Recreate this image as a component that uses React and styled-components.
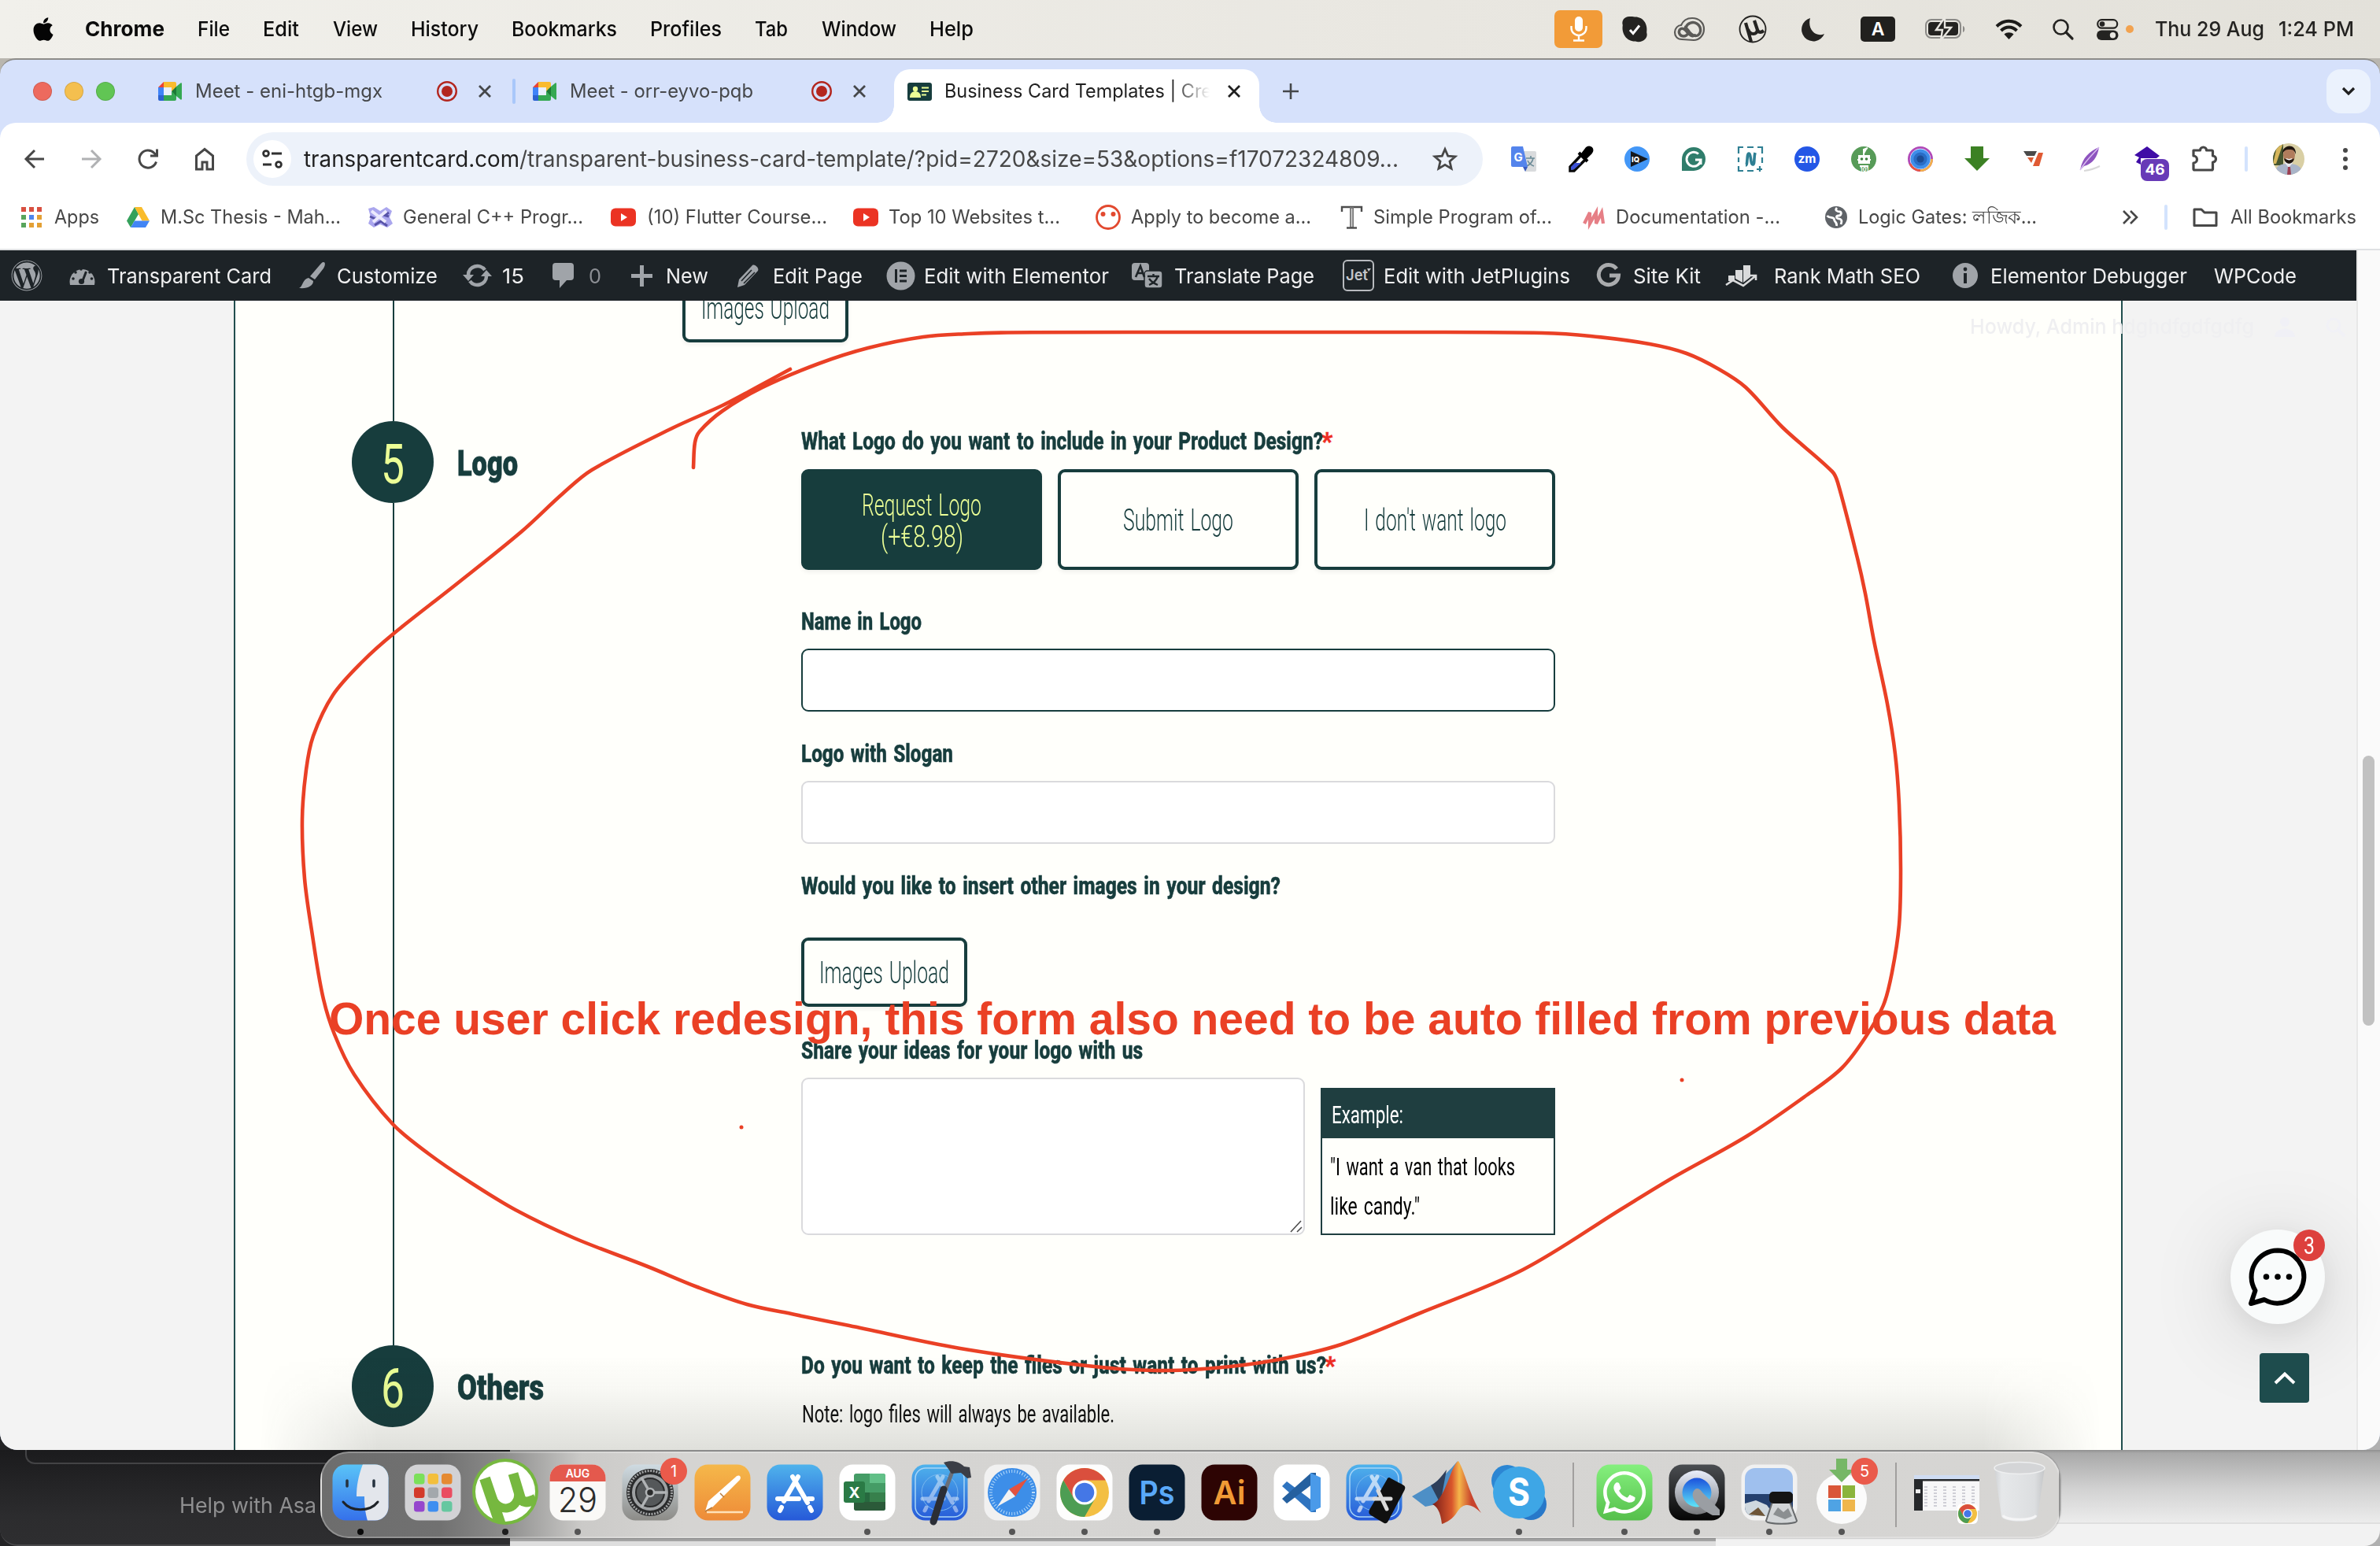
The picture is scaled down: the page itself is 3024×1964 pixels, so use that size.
import React, { useLayoutEffect, useRef } from 'react';
import styled, { createGlobalStyle, css } from 'styled-components';
import { FaApple, FaWordpress, FaWhatsapp } from 'react-icons/fa';

const INK = '#173d3d';
const RED = '#ea4025';
const UI = 'Inter, "Liberation Sans", sans-serif';
const NARROW = 'Roboto, "Liberation Sans", sans-serif';

const Global = createGlobalStyle`
  * { box-sizing: border-box; }
  body { margin: 0; background: #2a2a2c; font-family: ${UI}; }
  svg { display: block; overflow: visible; flex: none; }
`;

/* ---------- text that is condensed or widened to a given measure ---------- */
const Measure = styled.span`
  display: block;
  flex: none;
  width: ${(p) => p.$w}px;
  margin-left: ${(p) => p.$ml || 0}px;
  white-space: nowrap;
`;
const Glyphs = styled.span`
  display: inline-block;
  transform-origin: 0 50%;
  white-space: pre;
`;
function Fit({ w, ml, children, className }) {
  const ref = useRef(null);
  useLayoutEffect(() => {
    const el = ref.current;
    el.style.transform = 'none';
    const natural = el.getBoundingClientRect().width;
    if (natural) el.style.transform = `scaleX(${w / natural})`;
  }, [w, children]);
  return (
    <Measure $w={w} $ml={ml} className={className}>
      <Glyphs ref={ref}>{children}</Glyphs>
    </Measure>
  );
}

const IconSvg = styled.svg`
  margin-left: ${(p) => p.$ml}px;
`;
const Icon = ({ w = 32, h, vb, ml = 0, children, ...rest }) => (
  <IconSvg $ml={ml} width={w} height={h || w} viewBox={vb || `0 0 ${w} ${h || w}`} fill="none" {...rest}>
    {children}
  </IconSvg>
);

/* ---------- screen ---------- */
const Screen = styled.div`
  position: relative;
  width: 3024px;
  height: 1964px;
  overflow: hidden;
  display: flex;
  flex-direction: column;
  background:
    linear-gradient(#b9b6af, #b9b6af) 0 0 / 100% 200px no-repeat,
    linear-gradient(90deg, #232325 0 648px, #b0b0b0 648px);
`;

/* ---------- menu bar ---------- */
const MenuBar = styled.header`
  height: 74px;
  flex: none;
  display: flex;
  align-items: center;
  padding: 0 33px 0 38px;
  background: linear-gradient(90deg, #f1f0eb, #e9e7e1 60%, #e3e1da);
  color: #0c0c0c;
  font: 500 26px/40px ${UI};
`;
const MenuTitle = styled(Fit)`
  font-weight: 700;
`;
const MenuItems = styled.nav`
  display: flex;
  gap: 42.2px;
  margin-left: 44px;
`;
const StatusItems = styled.div`
  display: flex;
  align-items: center;
  margin-left: auto;
  color: #242321;
`;
const MicBox = styled.div`
  width: 61px;
  height: 48px;
  border-radius: 7px;
  background: #f29b38;
  display: grid;
  place-items: center;
`;
const InputSource = styled.div`
  width: 44px;
  height: 32px;
  margin-left: 45px;
  border-radius: 5px;
  background: #21201e;
  color: #fff;
  font: 600 23px/33px ${UI};
  text-align: center;
`;
const PrivacyDot = styled.i`
  width: 10px;
  height: 10px;
  margin-left: 9px;
  border-radius: 50%;
  background: #f2a24f;
`;

const menus = [['File', 41], ['Edit', 46], ['View', 57], ['History', 86], ['Bookmarks', 134], ['Profiles', 91], ['Tab', 42], ['Window', 95], ['Help', 56]];

function TopBar() {
  return (
    <MenuBar>
      <FaApple size={34} color="#050505" />
      <MenuItems>
        <MenuTitle w={101} ml={-8}>Chrome</MenuTitle>
        {menus.map(([t, w]) => <Fit key={t} w={w}>{t}</Fit>)}
      </MenuItems>
      <StatusItems>
        <MicBox>
          <Icon w={22} h={32}>
            <rect x="6" y="0" width="10" height="19" rx="5" fill="#fff" />
            <path d="M1.5 12v2.500a9.500 9.500 0 0 0 19 0V12M11 24v6M4 30.500h14" stroke="#fff" strokeWidth="2.400" />
          </Icon>
        </MicBox>
        <Icon w={32} ml={25}>
          <path d="M9 0C3 0-1 5 .8 11-1 22 6 32 17 31.500 24 34 34 29 31.200 20 33 9 26 0 16 .6 14 0 12 0 9 0z" fill="#242321" />
          <path d="M10 17l4 4.500 8-10" stroke="#fff" strokeWidth="3" />
        </Icon>
        <Icon w={40} h={30} ml={34}>
          <path d="M10 28C4 28 1 24 1 19s4-9 8-9C12 3 17 1 23 1c9 0 15 6 15 14s-6 14-13 14z" stroke="#5b5a57" strokeWidth="2.200" />
          <path d="M28 22c-5 4-9 0-12-4-3-4-7-5-9-2-2 4 1 8 5 8 3 0 5-2 6-4M15 13c2-6 9-8 14-5 6 4 6 12 1 15-5 2-8-1-11-5-2-3-3-5-6-6" stroke="#5b5a57" strokeWidth="3.400" />
        </Icon>
        <Icon w={36} ml={42}>
          <circle cx="18" cy="18" r="16.500" stroke="#242321" strokeWidth="1.800" />
          <path d="M9 10l7 24M12 18c2 8 12 8 12 0M20 7l4 12c1 3 4 4 8 1" stroke="#242321" strokeWidth="4.200" />
        </Icon>
        <Icon w={28} ml={46}>
          <path d="M9 0A15 15 0 1 0 27 20C16 25 5 14 9 0z" fill="#242321" />
        </Icon>
        <InputSource>A</InputSource>
        <Icon w={52} h={26} ml={38}>
          <rect x="1" y="1" width="44" height="23" rx="7" stroke="#8b8a87" strokeWidth="2" />
          <rect x="4" y="4" width="38" height="17" rx="4" fill="#242321" />
          <path d="M25-2L14 14h8l-2 13 13-16h-8z" fill="#242321" stroke="#e8e6e0" strokeWidth="2.400" />
          <path d="M48 9v8c3-1 3-7 0-8z" fill="#8b8a87" />
        </Icon>
        <Icon w={35} h={26} ml={37}>
          <path d="M2 9.500c9-9 22-9 31 0M7.500 15c6-6 14-6 20 0" stroke="#1c1b19" strokeWidth="4" />
          <path d="M17.500 26l-6-6.500c3-3 9-3 12 0z" fill="#1c1b19" />
        </Icon>
        <Icon w={26} ml={38}>
          <circle cx="10.500" cy="10.500" r="9" stroke="#242321" strokeWidth="2.600" />
          <path d="M17 17l8 8" stroke="#242321" strokeWidth="3.200" strokeLinecap="round" />
        </Icon>
        <Icon w={28} h={27} ml={30}>
          <rect x="1.200" y="1.200" width="25" height="10.500" rx="5.200" stroke="#242321" strokeWidth="2.200" />
          <circle cx="7" cy="6.500" r="3.300" fill="#242321" />
          <rect x="0" y="14.500" width="27.500" height="12.500" rx="6.200" fill="#242321" />
          <circle cx="20.500" cy="20.700" r="3.700" fill="#e8e6e0" />
        </Icon>
        <PrivacyDot />
        <Fit w={139} ml={27}>Thu 29 Aug</Fit>
        <Fit w={96} ml={18}>1:24 PM</Fit>
      </StatusItems>
    </MenuBar>
  );
}

/* ---------- browser window ---------- */
const BrowserWindow = styled.main`
  height: 1768px;
  flex: none;
  border-top: 2px solid #8d8c89;
  border-radius: 20px 20px 22px 22px;
  overflow: hidden;
  display: flex;
  flex-direction: column;
  background: #d6e1fb;
`;
const TabStrip = styled.div`
  height: 80px;
  flex: none;
  display: flex;
  align-items: center;
  padding: 0 12px 0 42px;
  color: #45474a;
  font: 400 24px/36px ${UI};
`;
const Lights = styled.div`
  display: flex;
  gap: 16px;
`;
const Light = styled.i`
  width: 24px;
  height: 24px;
  border-radius: 50%;
  background: ${(p) => p.$c};
  border: 1px solid rgba(0, 0, 0, 0.12);
`;
const TabRule = styled.i`
  width: 4px;
  height: 32px;
  margin-left: ${(p) => p.$ml}px;
  border-radius: 2px;
  background: ${(p) => p.$c || '#a9c7fa'};
`;
const ActiveTab = styled.div`
  position: relative;
  align-self: flex-end;
  width: 464px;
  height: 68px;
  margin-left: 34px;
  padding-left: 17px;
  padding-bottom: 12px;
  border-radius: 20px 20px 0 0;
  background: #fff;
  color: #1f1f1f;
  display: flex;
  align-items: center;
  &::before, &::after {
    content: '';
    position: absolute;
    bottom: 0;
    width: 22px;
    height: 22px;
  }
  &::before { left: -22px; background: radial-gradient(circle at 0 0, transparent 21.5px, #fff 22px); }
  &::after { right: -22px; background: radial-gradient(circle at 100% 0, transparent 21.5px, #fff 22px); }
`;
const Fade = styled.div`
  width: 337px;
  margin-left: 16px;
  mask-image: linear-gradient(90deg, #000 86%, transparent 100%);
`;
const TabMenu = styled.div`
  width: 56px;
  height: 56px;
  margin-left: auto;
  border-radius: 18px;
  background: #ebf2fd;
  display: grid;
  place-items: center;
`;
const Chrome = styled.div`
  height: 162px;
  flex: none;
  background: #fff;
  border-radius: 20px 20px 0 0;
  border-bottom: 2px solid #dfe1e3;
`;
const NavRow = styled.div`
  height: 92px;
  display: flex;
  align-items: center;
  padding-left: 30px;
`;
const NavButtons = styled.div`
  display: flex;
  gap: 44px;
`;
const AddressBar = styled.div`
  width: 1571px;
  height: 68px;
  margin-left: 39px;
  padding-left: 9px;
  border-radius: 34px;
  background: #edf2fa;
  display: flex;
  align-items: center;
  color: #474747;
  font: 400 28px/40px ${UI};
`;
const SiteInfo = styled.div`
  width: 48px;
  height: 48px;
  border-radius: 50%;
  background: #fff;
  display: grid;
  place-items: center;
`;
const Domain = styled(Fit)`
  color: #1f1f1f;
`;
const Extensions = styled.div`
  display: flex;
  gap: 40px;
  margin-left: 36px;
`;
const ExtSlot = styled.div`
  position: relative;
  width: 32px;
  height: 32px;
`;
const CountBadge = styled.span`
  position: absolute;
  left: 8px;
  top: 16px;
  width: 36px;
  height: 28px;
  border-radius: 8px;
  background: #673ab7;
  color: #fff;
  font: 700 19px/28px ${UI};
  text-align: center;
`;
const Bookmarks = styled.div`
  height: 56px;
  display: flex;
  align-items: center;
  padding-left: 27px;
  color: #474747;
  font: 400 24px/36px ${UI};
`;

const Meet = ({ ml }) => (
  <Icon w={30} h={24} ml={ml}>
    <path d="M0 7L7 0v7z" fill="#e94235" />
    <path d="M7 0h14a2 2 0 0 1 2 2v6l-6 4V7H7z" fill="#f9bb2d" />
    <path d="M0 7h7v10H0z" fill="#3f83f8" />
    <path d="M0 17h7v7H2a2 2 0 0 1-2-2z" fill="#2c62d0" />
    <path d="M7 17h10v-5l6 5v5a2 2 0 0 1-2 2H7z" fill="#35a852" />
    <path d="M7 7h10v10H7z" fill="#e9effc" />
    <path d="M17 12l6-6v12z" fill="#1b7a35" />
    <path d="M23 6l5.500-4.500c.8-.5 1.500 0 1.500 1v19c0 1-.7 1.500-1.500 1L23 18z" fill="#35a852" />
  </Icon>
);
const Recording = ({ ml }) => (
  <Icon w={26} ml={ml}>
    <circle cx="13" cy="13" r="11.800" stroke="#b3261e" strokeWidth="2.400" />
    <circle cx="13" cy="13" r="7" fill="#b3261e" />
  </Icon>
);
const Close = ({ ml, c = '#45474a' }) => (
  <Icon w={20} ml={ml}><path d="M3 3l14 14M17 3L3 17" stroke={c} strokeWidth="2.800" /></Icon>
);
const YouTube = ({ ml }) => (
  <Icon w={32} h={24} ml={ml}>
    <rect width="32" height="23" y=".5" rx="6" fill="#eb3323" />
    <path d="M13 7l8 5-8 5z" fill="#fff" />
  </Icon>
);

function Tabs() {
  return (
    <TabStrip>
      <Lights><Light $c="#ed6a5e" /><Light $c="#f4bf4f" /><Light $c="#61c554" /></Lights>
      <Meet ml={55} />
      <Fit w={238} ml={17}>Meet - eni-htgb-mgx</Fit>
      <Recording ml={69} />
      <Close ml={25} />
      <TabRule $ml={25} />
      <Meet ml={22} />
      <Fit w={233} ml={17}>Meet - orr-eyvo-pqb</Fit>
      <Recording ml={74} />
      <Close ml={25} />
      <ActiveTab>
        <Icon w={31} h={23}>
          <rect width="31" height="23" rx="3" fill="#173d3d" />
          <circle cx="10" cy="8" r="3.200" fill="#ecff96" />
          <path d="M4 18c0-8 12-8 12 0zM18 6.500h9M18 11h9M18 15.500h6" stroke="#ecff96" strokeWidth="2" fill="#ecff96" />
        </Icon>
        <Fade><Fit w={340}>Business Card Templates | Cre</Fit></Fade>
        <Close ml={21} c="#1f1f1f" />
      </ActiveTab>
      <Icon w={20} ml={30}><path d="M10 0v20M0 10h20" stroke="#45474a" strokeWidth="2.600" /></Icon>
      <TabMenu>
        <Icon w={18} h={12}><path d="M2 2l7 7 7-7" stroke="#1f1f1f" strokeWidth="3.200" /></Icon>
      </TabMenu>
    </TabStrip>
  );
}

function ExtensionIcons() {
  return (
    <Extensions>
      <Icon>
        <path d="M12 6h18a2 2 0 0 1 2 2v22a2 2 0 0 1-2 2H18z" fill="#d9dbdd" />
        <path d="M19 15h11M25 12v3M28 15c-1 5-4 8-8 10M21 18c2 4 5 6 8 7" stroke="#6a8a96" strokeWidth="1.600" />
        <path d="M2 0h13l6 26H2a2 2 0 0 1-2-2V2a2 2 0 0 1 2-2z" fill="#5484ec" />
        <path d="M15 26h6l-3 6z" fill="#3a5bbd" />
        <text x="3.500" y="19" fontFamily={UI} fontWeight="700" fontSize="15" fill="#fff">G</text>
      </Icon>
      <Icon>
        <path d="M18 10L3 26v5h5L23 16" fill="#fff" stroke="#0a0a0a" strokeWidth="3.500" />
        <path d="M9 21h8L8 29l-4 1v-4z" fill="#3c51d6" />
        <path d="M14 8l11 11M18 11l6-8c4-4 9 1 5 5l-7 7z" stroke="#000" strokeWidth="4" fill="#000" />
      </Icon>
      <Icon>
        <circle cx="16" cy="16" r="16" fill="#4397f7" />
        <path d="M8 6l22 10L8 26z" fill="#15191d" />
        <text x="9" y="19.500" fontFamily={UI} fontWeight="800" fontSize="9.500" fill="#fff">IQ</text>
      </Icon>
      <Icon>
        <path d="M1 31V16A15 15 0 1 1 16 31z" fill="#2f7d6b" />
        <path d="M22 9.500A9 9 0 1 0 25 17h-7M25 17v6" stroke="#fff" strokeWidth="3" />
      </Icon>
      <Icon>
        <path d="M1 9V1h6M12 1h8M25 1h6v8M31 14v7M1 14v6M1 25v6h6M12 31h8M24 29h7M28 25v7" stroke="#2e7f93" strokeWidth="2.200" />
        <path d="M10 24c3 0 1-15 4-15s2 14 5 14 1-8 3-15" stroke="#2e7f93" strokeWidth="3.600" />
      </Icon>
      <Icon>
        <circle cx="16" cy="16" r="16" fill="#2457e6" />
        <text x="16" y="21" textAnchor="middle" fontFamily={UI} fontWeight="700" fontSize="15.500" fill="#fff">zm</text>
      </Icon>
      <Icon>
        <circle cx="16" cy="16" r="16" fill="#579b58" />
        <path d="M16 11V4l5-2M10 12h13v9H10zM8 17h17M11 25h11" fill="#fff" stroke="#fff" strokeWidth="2" />
        <text x="17" y="32" textAnchor="middle" fontFamily={UI} fontWeight="700" fontSize="7" fill="#fff">101</text>
        <circle cx="13.500" cy="16" r="1.800" fill="#3e8040" /><circle cx="19.500" cy="16" r="1.800" fill="#3e8040" />
      </Icon>
      <Icon>
        <circle cx="16" cy="16" r="14.600" stroke="#b04ab8" strokeWidth="2.800" />
        <path d="M16 30.600A14.600 14.600 0 0 0 30.600 16" stroke="#f2b14b" strokeWidth="2.800" />
        <path d="M3 22a14.600 14.600 0 0 0 13 8.600" stroke="#e8553e" strokeWidth="2.800" />
        <circle cx="16" cy="16" r="12.600" fill="#3f8ee9" /><circle cx="16" cy="16" r="8.600" fill="#2a6cc4" /><circle cx="16" cy="16" r="4.600" fill="#1c4c94" />
      </Icon>
      <Icon><path d="M8 0h16v15h8L16 31 0 15h8z" fill="#3c8124" /></Icon>
      <Icon>
        <path d="M3 6h17l-3 6H7z" fill="#4a4a4a" /><path d="M8 14h8l-3 7z" fill="#d95c35" />
        <path d="M22 8h6l-5 17h-8z" fill="#e05a33" />
      </Icon>
      <Icon>
        <path d="M27 1C15 6 6 14 3 30l5-5C19 22 25 14 27 1z" fill="#8e54bf" />
        <path d="M27 1C19 10 10 18 3 30" stroke="#d9bdf0" strokeWidth="1.500" />
        <path d="M8 31c8-1 14-3 20-6" stroke="#d8d8d8" strokeWidth="2" />
      </Icon>
      <ExtSlot>
        <Icon><path d="M16 0l16 12-4 3H8v8l-6-3 4-6-6-3z" fill="#3f0ca6" /></Icon>
        <CountBadge>46</CountBadge>
      </ExtSlot>
      <Icon>
        <path d="M3 5h8.500a4 4 0 0 1 8 0H26a1.500 1.500 0 0 1 1.500 1.500V12a4 4 0 0 1 0 8v8.500A1.500 1.500 0 0 1 26 30H4.500A1.500 1.500 0 0 1 3 28.500V21a4.500 4.500 0 0 0 0-9z" stroke="#474747" strokeWidth="3.200" strokeLinejoin="round" />
      </Icon>
    </Extensions>
  );
}

function Toolbar() {
  return (
    <Chrome>
      <NavRow>
        <NavButtons>
          <Icon w={28}><path d="M26 14H4M14 3L3 14l11 11" stroke="#474747" strokeWidth="3" /></Icon>
          <Icon w={28}><path d="M2 14h22M14 3l11 11-11 11" stroke="#b0b1b3" strokeWidth="3" /></Icon>
          <Icon w={28}><path d="M24.500 17.500A11 11 0 1 1 22 6.500l3 3M25.500 1.500V10H17" stroke="#474747" strokeWidth="3" /></Icon>
          <Icon w={28}><path d="M3.500 27V10L14 1.500 24.500 10v17h-7.500v-9h-6v9z" stroke="#474747" strokeWidth="3" /></Icon>
        </NavButtons>
        <AddressBar>
          <SiteInfo>
            <Icon w={26} h={24}>
              <circle cx="5" cy="5" r="3.400" stroke="#303030" strokeWidth="2.800" /><path d="M12 5h13M1 19h11" stroke="#303030" strokeWidth="3" />
              <circle cx="21" cy="19" r="3.400" stroke="#303030" strokeWidth="2.800" />
            </Icon>
          </SiteInfo>
          <Domain w={274} ml={16}>transparentcard.com</Domain>
          <Fit w={1117}>/transparent-business-card-template/?pid=2720&size=53&options=f17072324809...</Fit>
          <Icon w={32} ml={43}>
            <path d="M16 3.500l3.700 8.600 9.300.8-7 6.100 2.100 9.100-8.100-4.800-8.100 4.800 2.100-9.100-7-6.100 9.300-.8z" stroke="#474747" strokeWidth="2.800" />
          </Icon>
        </AddressBar>
        <ExtensionIcons />
        <TabRule $ml={36} $c="#d3e3fd" />
        <Icon w={40} ml={32}>
          <defs><clipPath id="face"><circle cx="20" cy="20" r="20" /></clipPath></defs>
          <g clipPath="url(#face)">
            <rect width="40" height="40" fill="#d9cfa4" /><path d="M0 0h13v28H0z" fill="#46552f" /><path d="M6 0h7l-9 26H0z" fill="#d6b65c" />
            <path d="M2 40c1-12 8-14 18-14s17 3 18 14z" fill="#a9b4c8" />
            <path d="M15 25l5 6 5-6v-4H15z" fill="#e9e9ee" /><path d="M19 30h3l1 10h-5z" fill="#9c3f52" />
            <ellipse cx="20.500" cy="15" rx="7.500" ry="10" fill="#b07c5c" />
            <path d="M12 14C11 1 30-1 29 14c-2-5-3-6-8-6s-7 1-9 6zM14 19c1 9 12 9 13 0-2 2-3 1-6 1s-5 1-7-1z" fill="#20160f" />
            <path d="M17 19.500c2 1.500 5 1.500 7 0" stroke="#fff" strokeWidth="1.500" />
          </g>
        </Icon>
        <Icon w={6} h={28} ml={49}>
          <circle cx="3" cy="3" r="3" fill="#474747" /><circle cx="3" cy="14" r="3" fill="#474747" /><circle cx="3" cy="25" r="3" fill="#474747" />
        </Icon>
      </NavRow>
      <Bookmarks>
        <Icon w={26}>
          {['#d85040', '#d85040', '#d85040', '#58a55c', '#4f86ec', '#e3a035', '#58a55c', '#e3a035', '#e3a035'].map((c, i) => (
            <rect key={i} x={(i % 3) * 10} y={Math.floor(i / 3) * 10} width="6" height="6" fill={c} />
          ))}
        </Icon>
        <Fit w={57} ml={16}>Apps</Fit>
        <Icon w={29} h={26} ml={35}>
          <path d="M10 0L0 17.500 5 26l10-17z" fill="#35a15c" /><path d="M10 0h9l10 17.500H19.500z" fill="#f9bc2c" />
          <path d="M5 26l5-8.500h19L24 26z" fill="#4285f4" />
        </Icon>
        <Fit w={229} ml={14}>M.Sc Thesis - Mah...</Fit>
        <Icon w={32} h={28} ml={34}>
          <path d="M1 3l7-2 8 5 8-5 7 5-3 8 4 8-7 5-9-4-8 4-7-5 3-8z" fill="#aaa6ee" />
          <path d="M3 13l9 4M17 10l10 3M9 24l8-5 8 6M27 8l-6 4" stroke="#5752a8" strokeWidth="3" />
          <path d="M5 6l18 14M24 6L7 20" stroke="#eceafd" strokeWidth="4" />
        </Icon>
        <Fit w={229} ml={13}>General C++ Progr...</Fit>
        <YouTube ml={35} />
        <Fit w={229} ml={14}>(10) Flutter Course...</Fit>
        <YouTube ml={33} />
        <Fit w={218} ml={13}>Top 10 Websites t...</Fit>
        <Icon w={32} ml={45}>
          <circle cx="16" cy="16" r="14.500" stroke="#e2492f" strokeWidth="2.800" />
          <circle cx="9.500" cy="12" r="3" fill="#e2492f" /><circle cx="22.500" cy="12" r="3" fill="#e2492f" />
        </Icon>
        <Fit w={229} ml={13}>Apply to become a...</Fit>
        <Icon w={29} h={30} ml={37}>
          <path d="M2 8V2h25v6" stroke="#4d4d4d" strokeWidth="2.400" /><path d="M14.500 2v26" stroke="#777" strokeWidth="5" /><path d="M8 28.500h13" stroke="#4d4d4d" strokeWidth="2.400" /><path d="M14.500 4v23" stroke="#d4d4d4" strokeWidth="1.600" />
        </Icon>
        <Fit w={227} ml={13}>Simple Program of...</Fit>
        <Icon w={30} h={18} ml={38}>
          <path d="M3 17l7-14v14l8-14v14l7-14 2 14" stroke="#e67f86" strokeWidth="4.200" />
        </Icon>
        <Fit w={209} ml={13}>Documentation -...</Fit>
        <Icon w={28} ml={57}>
          <circle cx="14" cy="14" r="14" fill="#5f6368" />
          <path d="M2.500 12c3 4 9 1 9 5 0 3 4 3 3 8M15 2c-3 3 0 5 4 5 2 0 2 5-2 5s-3 4 1 4c4 1 3 4 2 7" stroke="#fff" strokeWidth="2.800" />
        </Icon>
        <Fit w={227} ml={14}>Logic Gates: লজিক...</Fit>
        <Icon w={20} h={18} ml={108}><path d="M2 1l8 8-8 8M11 1l8 8-8 8" stroke="#474747" strokeWidth="2.600" /></Icon>
        <TabRule $ml={34} $c="#d3e3fd" />
        <Icon w={32} h={24} ml={32}><path d="M2 2h9l4 4h15v16.500H2z" stroke="#474747" strokeWidth="3" strokeLinejoin="round" /></Icon>
        <Fit w={160} ml={16}>All Bookmarks</Fit>
      </Bookmarks>
    </Chrome>
  );
}

/* ---------- page ---------- */
const Viewport = styled.div`
  flex: 1;
  min-height: 0;
  display: flex;
`;
const Site = styled.div`
  width: 2994px;
  display: flex;
  flex-direction: column;
`;
const ScrollTrack = styled.div`
  width: 30px;
  padding: 642px 7px 0 6px;
  background: #fafafa;
  border-left: 2px solid #e8e8e8;
`;
const ScrollThumb = styled.div`
  height: 343px;
  border-radius: 8px;
  background: #c1c1c1;
`;
const AdminBar = styled.div`
  height: 64px;
  flex: none;
  display: flex;
  align-items: center;
  padding-left: 14px;
  background: #1d2327;
  color: #f0f0f1;
  font: 400 26px/42px ${UI};
  span { padding-top: 1px; }
`;
const Dim = styled(Fit)`
  color: #8c8f94;
`;
const GREY = '#a0a4a9';

function WpBar() {
  return (
    <AdminBar>
      <FaWordpress size={40} color={GREY} />
      <Icon w={33} h={28} ml={34}>
        <path d="M1 26a16 16 0 1 1 31 0z" fill={GREY} />
        <path d="M16.500 22l5-13" stroke="#1d2327" strokeWidth="3" />
        <circle cx="15.500" cy="21.500" r="3.600" fill="#1d2327" />
        {[[5, 18], [8, 10], [15, 6], [26, 10], [28.500, 18]].map(([x, y]) => <circle key={x} cx={x} cy={y} r="1.800" fill="#1d2327" />)}
      </Icon>
      <Fit w={209} ml={15}>Transparent Card</Fit>
      <Icon w={33} h={34} ml={35}>
        <path d="M31 0c3 0 2 5 0 8L20 22l-6-4L26 4c2-2 3-4 5-4z" fill={GREY} />
        <path d="M12 20l6 4c0 6-7 10-18 9 5-2 4-11 12-13z" fill={GREY} />
      </Icon>
      <Fit w={128} ml={15}>Customize</Fit>
      <Icon w={37} h={28} ml={32}>
        <path d="M7 13C7 2 22-2 28 7M30 15c0 11-15 15-21 6" stroke={GREY} strokeWidth="4.500" />
        <path d="M0 13h14l-7 8zM23 15h14l-7-8z" fill={GREY} />
      </Icon>
      <Fit w={28} ml={13}>15</Fit>
      <Icon w={27} h={32} ml={36}><path d="M4 0h19a4 4 0 0 1 4 4v14a4 4 0 0 1-4 4h-5L9 32V22H4a4 4 0 0 1-4-4V4a4 4 0 0 1 4-4z" fill={GREY} /></Icon>
      <Dim w={16} ml={19}>0</Dim>
      <Icon w={27} ml={38}><path d="M13.500 0v27M0 13.500h27" stroke={GREY} strokeWidth="5" /></Icon>
      <Fit w={54} ml={17}>New</Fit>
      <Icon w={29} ml={36}>
        <path d="M20 1c3-2 9 4 7 7L10 26l-9 3 2-10z" fill={GREY} /><path d="M19 7L6 21M23 10L9 24" stroke="#1d2327" strokeWidth="1.600" />
      </Icon>
      <Fit w={114} ml={17}>Edit Page</Fit>
      <Icon w={37} ml={30}>
        <circle cx="18.500" cy="18.500" r="18" fill={GREY} />
        <path d="M12.500 10v17M17 12h9M17 18.500h9M17 25h9" stroke="#1d2327" strokeWidth="3" />
      </Icon>
      <Fit w={235} ml={11}>Edit with Elementor</Fit>
      <Icon w={39} h={32} ml={29}>
        <rect width="22" height="22" rx="4" fill={GREY} /><rect x="16" y="10" width="23" height="22" rx="4" fill={GREY} stroke="#1d2327" strokeWidth="1.500" />
        <path d="M5 18l6-14 5 14M7 13h8" stroke="#1d2327" strokeWidth="2.600" />
        <path d="M20 17h15M27.500 14v3M33 17c-2 6-6 9-11 11M22 20c3 4 6 6 11 8" stroke="#1d2327" strokeWidth="2.400" />
      </Icon>
      <Fit w={178} ml={15}>Translate Page</Fit>
      <Icon w={40} ml={36}>
        <rect x="1" y="1" width="38" height="38" rx="5" stroke="#b8bbbf" strokeWidth="2" />
        <text x="4" y="26" fontFamily={UI} fontWeight="600" fontSize="19" fill="#c3c5c8" textLength="28" lengthAdjust="spacingAndGlyphs">Jet</text>
        <path d="M31 11h5l-3 4z" fill="#c3c5c8" />
      </Icon>
      <Fit w={237} ml={12}>Edit with JetPlugins</Fit>
      <Icon w={30} ml={34}>
        <path d="M25 6.500A12.600 12.600 0 1 0 27.500 15H16" stroke="#a9abad" strokeWidth="5" />
      </Icon>
      <Fit w={86} ml={16}>Site Kit</Fit>
      <Icon w={41} h={26} ml={31}>
        <path d="M4 13h8v7H4zM13 6h9v16l-9-5zM23 0h9v15l-9 7z" fill="#d9dadb" />
        <path d="M1 25l9-6 13 7 15-12M32 13h7v6" stroke="#d9dadb" strokeWidth="2.600" />
      </Icon>
      <Fit w={186} ml={21}>Rank Math SEO</Fit>
      <Icon w={32} ml={41}>
        <circle cx="16" cy="16" r="16" fill={GREY} /><circle cx="16" cy="8" r="2.400" fill="#1d2327" /><path d="M16 13v13" stroke="#1d2327" strokeWidth="4" />
      </Icon>
      <Fit w={250} ml={16}>Elementor Debugger</Fit>
      <Fit w={105} ml={34}>WPCode</Fit>
    </AdminBar>
  );
}

const Body = styled.div`
  flex: 1;
  min-height: 0;
  background: #f3f3f3;
  padding: 0 297px;
`;
const Panel = styled.div`
  height: 100%;
  background: #fffffb;
  border: solid #214e4e;
  border-width: 0 2px;
  overflow: hidden;
  word-spacing: 3px;
`;
const Step = styled.section`
  height: ${(p) => p.$h}px;
  padding-left: 148px;
  display: grid;
  grid-template-columns: 104px 467px 958px;
`;
const Rail = styled.div`
  display: flex;
  flex-direction: column;
  align-items: center;
`;
const RailLine = styled.i`
  flex: 1;
  width: 2px;
  margin-left: 2px;
  background: ${INK};
`;
const StepNumber = styled.div`
  width: 104px;
  height: 104px;
  flex: none;
  border-radius: 50%;
  background: ${INK};
  color: #ecff96;
  display: flex;
  justify-content: center;
  padding-top: 3px;
  font: 450 70px/104px ${NARROW};
`;
const StepTitle = styled.h2`
  margin: 0;
  padding-left: 30px;
  color: ${INK};
  font: 900 44px/108px ${NARROW};
  -webkit-text-stroke: 0.8px ${INK};
`;
const Form = styled.div`
  display: flex;
  flex-direction: column;
  align-items: flex-start;
  padding-top: 6px;
`;
const Label = styled.div`
  display: flex;
  height: 40px;
  margin: ${(p) => p.$mt || 0}px 0 0 0;
  color: ${INK};
  font: 800 31px/40px ${NARROW};
  -webkit-text-stroke: 0.5px;
`;
const Star = styled.span`
  color: #ee2d24;
  margin-left: -2px;
`;
const NoteText = styled(Fit)`
  margin-top: 22px;
  margin-left: 1px;
  color: #0d0d0d;
  font: 450 31px/40px ${NARROW};
`;
const Choices = styled.div`
  display: flex;
  gap: 20px;
  margin-top: 15px;
`;
const Button = styled.div`
  width: ${(p) => p.$w}px;
  height: ${(p) => p.$h}px;
  margin-top: ${(p) => p.$mt || 0}px;
  margin-left: ${(p) => p.$ml || 0}px;
  flex: none;
  display: flex;
  flex-direction: column;
  align-items: center;
  justify-content: center;
  padding-top: 2px;
  border: 4px solid ${INK};
  border-radius: 9px;
  box-shadow: 0 3px 5px rgba(0, 0, 0, 0.06);
  color: ${INK};
  font: 300 39.5px/40px ${NARROW};
  ${(p) => p.$on && css`
    background: ${INK};
    color: #ecff96;
    padding-top: 3px;
  `}
`;
const Field = styled.div`
  width: 958px;
  height: 80px;
  margin-top: 14px;
  flex: none;
  background: #fff;
  border: 2px solid ${(p) => (p.$focus ? INK : '#dadadd')};
  border-radius: 9px;
`;
const IdeaRow = styled.div`
  display: flex;
  align-items: flex-end;
  justify-content: space-between;
  width: 958px;
  margin-top: 14px;
`;
const TextArea = styled.div`
  width: 640px;
  height: 200px;
  border: 2px solid #dadadd;
  border-radius: 9px;
  background: #fff;
  display: flex;
  align-items: flex-end;
  justify-content: flex-end;
  padding: 2px;
`;
const Example = styled.div`
  width: 298px;
  height: 187px;
  border: 2px solid #1f3e40;
  font: 450 31px/50px ${NARROW};
  color: #000;
`;
const ExampleHead = styled.div`
  height: 62px;
  padding: 0 0 0 12px;
  background: #1f3e40;
  color: #fff;
  line-height: 65px;
`;
const ExampleText = styled.div`
  padding: 12px 0 0 10px;
`;

function Page() {
  return (
    <Body>
      <Panel>
        <Step $h={153}>
          <Rail><RailLine /></Rail>
          <div><Button $w={211} $h={88} $mt={-35} $ml={316}><Fit w={163}>Images Upload</Fit></Button></div>
        </Step>
        <Step $h={1174}>
          <Rail><StepNumber><Fit w={30}>5</Fit></StepNumber><RailLine /></Rail>
          <StepTitle><Fit w={77}>Logo</Fit></StepTitle>
          <Form>
            <Label><Fit w={663}>What Logo do you want to include in your Product Design?</Fit><Star>*</Star></Label>
            <Choices>
              <Button $on $w={306} $h={128}><Fit w={152}>Request Logo</Fit><Fit w={105}>(+€8.98)</Fit></Button>
              <Button $w={306} $h={128}><Fit w={140}>Submit Logo</Fit></Button>
              <Button $w={306} $h={128}><Fit w={181}>I don't want logo</Fit></Button>
            </Choices>
            <Label $mt={46}><Fit w={153}>Name in Logo</Fit></Label>
            <Field $focus />
            <Label $mt={34}><Fit w={193}>Logo with Slogan</Fit></Label>
            <Field />
            <Label $mt={34}><Fit w={609}>Would you like to insert other images in your design?</Fit></Label>
            <Button $w={211} $h={88} $mt={45}><Fit w={165}>Images Upload</Fit></Button>
            <Label $mt={36}><Fit w={434}>Share your ideas for your logo with us</Fit></Label>
            <IdeaRow>
              <TextArea>
                <Icon w={14} h={14}><path d="M0 14L13 0M8 14l6-6" stroke="#4d4d4d" strokeWidth="1.600" /></Icon>
              </TextArea>
              <Example>
                <ExampleHead><Fit w={91}>Example:</Fit></ExampleHead>
                <ExampleText><Fit w={235}>"I want a van that looks</Fit><Fit w={114}>like candy."</Fit></ExampleText>
              </Example>
            </IdeaRow>
          </Form>
        </Step>
        <Step $h={133}>
          <Rail><StepNumber><Fit w={30}>6</Fit></StepNumber></Rail>
          <StepTitle><Fit w={110}>Others</Fit></StepTitle>
          <Form>
            <Label><Fit w={667}>Do you want to keep the files or just want to print with us?</Fit><Star>*</Star></Label>
            <NoteText w={397}>Note: logo files will always be available.</NoteText>
          </Form>
        </Step>
      </Panel>
    </Body>
  );
}

/* ---------- things floating over the page ---------- */
const Greeting = styled.div`
  position: absolute;
  left: 2503px;
  top: 395px;
  display: flex;
  align-items: center;
  color: #efeff1;
  font: 500 26px/40px ${UI};
`;
const ChatButton = styled.div`
  position: absolute;
  left: 2834px;
  top: 1562px;
  width: 120px;
  height: 120px;
  border-radius: 50%;
  background: #f9fbfb;
  box-shadow: 0 14px 110px rgba(0, 0, 0, 0.16), 0 8px 30px rgba(0, 0, 0, 0.07);
  display: grid;
  place-items: center;
`;
const ChatCount = styled.span`
  position: absolute;
  right: 0;
  top: 0;
  width: 40px;
  height: 40px;
  border-radius: 50%;
  background: #dd403d;
  color: #fff;
  display: flex;
  justify-content: center;
  font: 400 31px/42px ${NARROW};
`;
const ToTop = styled.div`
  position: absolute;
  left: 2871px;
  top: 1719px;
  width: 63px;
  height: 63px;
  border-radius: 4px;
  background: #1e4c4d;
  display: grid;
  place-items: center;
`;
const DockShade = styled.div`
  position: absolute;
  left: 330px;
  top: 1722px;
  width: 2340px;
  height: 120px;
  background: linear-gradient(180deg, rgba(40, 45, 40, 0) 0, rgba(40, 45, 40, 0.03) 35%, rgba(40, 45, 40, 0.15) 100%);
  mask-image: linear-gradient(90deg, transparent, #000 150px, #000 2190px, transparent);
`;
const Ink = styled.svg`
  position: absolute;
  left: 0;
  top: 0;
`;
const Remark = styled(Fit)`
  position: absolute;
  left: 418px;
  top: 1263px;
  color: ${RED};
  font: 700 57.5px/62px "Liberation Sans", Arial, sans-serif;
`;

const loop = [
  [881, 594], [883, 562], [889, 548], [918, 522], [969, 492], [1040, 462], [1103, 442], [1173, 428], [1230, 424], [1280, 422.500],
  [1500, 422], [1800, 422], [1960, 423], [2021, 427], [2096, 437], [2143, 449], [2184, 469], [2218, 492], [2265, 543], [2328, 599],
  [2335, 613], [2360, 709], [2370, 754], [2381, 814], [2398, 894], [2408, 958], [2413, 1022], [2415, 1105], [2413, 1175], [2404, 1235],
  [2393, 1277], [2370, 1318], [2340, 1357], [2296, 1391], [2220, 1443], [2124, 1497], [2060, 1536], [1935, 1613], [1802, 1669],
  [1704, 1708], [1620, 1728], [1542, 1738], [1465, 1741], [1381, 1735], [1220, 1713], [1079, 1684], [1010, 1670], [949, 1657], [886, 1635],
  [823, 1609], [730, 1573], [655, 1537], [596, 1501], [545, 1466], [499, 1428], [450, 1365], [425, 1314], [410, 1265], [396, 1182],
  [387, 1116], [384, 1041], [389, 978], [398, 935], [423, 883], [461, 840], [500, 805], [580, 742], [663, 675], [715, 627], [752, 597],
  [854, 544], [918, 515], [956, 495], [1004, 469],
];
const along = (from, to, length) => {
  const dx = to[0] - from[0];
  const dy = to[1] - from[1];
  const k = length / (Math.hypot(dx, dy) || 1);
  return [dx * k, dy * k];
};
const smooth = (pts) => pts.reduce((d, p, i) => {
  if (!i) return `M${p}`;
  const a = pts[i - 2] || pts[i - 1];
  const b = pts[i - 1];
  const n = pts[i + 1] || p;
  const third = Math.hypot(p[0] - b[0], p[1] - b[1]) / 3;
  const [ux, uy] = along(a, p, third);
  const [vx, vy] = along(b, n, third);
  return `${d}C${b[0] + ux} ${b[1] + uy} ${p[0] - vx} ${p[1] - vy} ${p}`;
}, '');

/* ---------- windows below ---------- */
const Below = styled.div`
  flex: 1;
  display: flex;
`;
const DarkWindow = styled.div`
  width: 648px;
  padding-left: 32px;
  background: linear-gradient(180deg, #1b1b1d, #2c2c2e 70%, #2e2e30);
  border-bottom: 2px solid #4a4a4c;
  border-radius: 0 0 0 22px;
  color: #8f8f90;
  font: 400 27px/40px ${UI};
`;
const DarkCard = styled.div`
  height: 18px;
  border: 2px solid #434345;
  border-width: 0 0 2px 2px;
  border-radius: 0 0 0 12px;
  margin-bottom: 33px;
`;
const LightWindow = styled.div`
  flex: 1;
  background: linear-gradient(180deg, #8f8f8f 0, #a9a9a9 4px, #d2d2d2 50px, #ececec 92px, #dfdfdf 92px, #dfdfdf 94px, #f2f2f2 94px);
  border-radius: 0 0 20px 0;
  display: flex;
  align-items: flex-end;
`;
const BackStrip = styled.div`
  width: 1532px;
  height: 10px;
  border-top: 4px solid #a3a3a3;
  background: #dedede;
`;

/* ---------- dock ---------- */
const DockBar = styled.div`
  position: absolute;
  left: 407px;
  top: 1844px;
  width: 2211px;
  height: 110px;
  padding-left: 3px;
  display: flex;
  border: 2px solid rgba(255, 255, 255, 0.25);
  border-radius: 36px;
  background: linear-gradient(90deg, #6d6d6d 0, #717171 150px, #8c8c8b 230px, #cbcac8 330px, #d5d4d2 460px, #d6d5d3);
  box-shadow: 0 0 2px rgba(0, 0, 0, 0.5);
`;
const DockCell = styled.div`
  width: 92px;
  padding-top: 10px;
  display: flex;
  flex-direction: column;
  align-items: center;
`;
const RunDot = styled.i`
  width: 8px;
  height: 8px;
  margin-top: 6px;
  border-radius: 50%;
  background: ${(p) => p.$c || '#555'};
`;
const DockRule = styled.i`
  width: 2px;
  height: 82px;
  margin: 12px 18px 0 22px;
  background: #a19f9e;
`;
const Art = ({ children }) => (
  <svg width="80" height="80" viewBox="-40 -40 80 80" fill="none" fontFamily={UI}>{children}</svg>
);
const Tile = ({ fill, stroke }) => <rect x="-35.500" y="-35.500" width="71" height="71" rx="17" fill={fill} stroke={stroke} />;
const Grad = ({ id, a, b }) => (
  <linearGradient id={id} x1="0" y1="0" x2="0" y2="1"><stop stopColor={a} /><stop offset="1" stopColor={b} /></linearGradient>
);
const Alert = ({ x, y, children }) => (
  <g>
    <circle cx={x} cy={y} r="17" fill="#ea5a4b" />
    <text x={x} y={y + 7} textAnchor="middle" fontSize="20" fill="#fff">{children}</text>
  </g>
);
const AppA = ({ w, op = 1 }) => (
  <g stroke="#fff" strokeWidth={w} strokeLinecap="round" opacity={op}>
    <path d="M-3-20l19 33M4-20l-18 31M-17 19l-2 4M-22 8h27M17 8h5M19 19l2 4" />
  </g>
);
const ChromeDisc = ({ r }) => (
  <g transform={`scale(${r / 31})`}>
    <circle r="31" fill="#f3bf43" />
    <path d="M-26.800-15.500A31 31 0 0 1 26.800-15.500L0-15.500-13.400 7.700z" fill="#da4f3d" />
    <path d="M-26.800-15.500A31 31 0 0 0 0 31L13.400 7.700-13.400 7.700z" fill="#4d9d53" />
    <circle r="15.500" fill="#fff" /><circle r="12.300" fill="#4477e6" />
  </g>
);
const dock = [
  ['finder', '#0a0a0a', <>
    <defs><Grad id="fa" a="#5ac4f8" b="#3570ea" /><clipPath id="fc"><rect x="-35.500" y="-35.500" width="71" height="71" rx="17" /></clipPath></defs>
    <g clipPath="url(#fc)"><path d="M-36-36h72v72h-72z" fill="url(#fa)" /><path d="M3-36C-3-20-5-8-5 5H5c0 12 1 20 4 31h30v-72z" fill="#e3e6ec" /></g>
    <path d="M-17-15v7M17-15v7" stroke="#26323f" strokeWidth="3.500" strokeLinecap="round" />
    <path d="M-22 12C-12 25 12 25 22 12" stroke="#1e2228" strokeWidth="3" strokeLinecap="round" />
  </>],
  ['launchpad', null, <>
    <Tile fill="#d2d2d5" />
    {['#7be05a', '#f3bf3c', '#e58a32', '#d33a2a', '#a3a8ac', '#ea4c60', '#9546cd', '#3f8ef0', '#66c7a0'].map((c, i) => (
      <rect key={c} x={-24 + (i % 3) * 17.500} y={-24 + Math.floor(i / 3) * 17.500} width="13.500" height="13.500" rx="3.500" fill={c} />
    ))}
  </>],
  ['torrent', '#1d1d1d', <>
    <defs><clipPath id="tc"><circle r="39" cy="-1" /></clipPath></defs>
    <circle r="42" fill="#76b83f" cy="-1" /><circle r="38" fill="#fff" cy="-1" />
    <g clipPath="url(#tc)" stroke="#76b83f">
      <path d="M-26-18L-5 44" strokeWidth="14" /><path d="M-17 6C-8 28 16 22 17 2" strokeWidth="11" />
      <path d="M10-24l9 30c2 7 9 8 20 2" strokeWidth="13" />
    </g>
  </>],
  ['calendar', '#555', <>
    <Tile fill="#faf9f7" />
    <path d="M-35.500-14v-4.500a17 17 0 0 1 17-17h37a17 17 0 0 1 17 17v4.500z" fill="#e4594d" />
    <text y="-19" textAnchor="middle" fontSize="14" fontWeight="600" fill="#fff">AUG</text>
    <text y="25" textAnchor="middle" fontSize="43" fontWeight="300" fill="#2c2c2c" textLength="50" lengthAdjust="spacingAndGlyphs">29</text>
  </>],
  ['settings', null, <>
    <defs><Grad id="se" a="#cfdbe2" b="#8c8b87" /></defs>
    <Tile fill="url(#se)" />
    <circle r="30" fill="#2a2b2c" /><circle r="27.500" stroke="#a4a6a7" strokeWidth="3" strokeDasharray="2 1.600" /><circle r="21" stroke="#9ea1a3" strokeWidth="4" />
    <circle r="17" fill="#55585a" />
    <circle r="5" fill="#2a2b2c" stroke="#b0b3b5" strokeWidth="2.500" /><path d="M6 0h15M-3-5l-8-14M-3 5l-8 14" stroke="#b0b3b5" strokeWidth="3.500" />
    <Alert x={30} y={-27}>1</Alert>
  </>],
  ['pages', null, <>
    <defs><Grad id="pa" a="#f5b84a" b="#ee8b38" /></defs><Tile fill="url(#pa)" />
    <path d="M-22 24l4-13L16-19c4-5 9-2 6 3L-13 19z" fill="#fff" /><path d="M-22 24l9-5M-3 1l5 5" stroke="#b97b3c" strokeWidth="1.500" /><path d="M-20 25h46" stroke="#ffe1b8" strokeWidth="2.500" />
  </>],
  ['appstore', null, <><defs><Grad id="as" a="#4fb3ec" b="#2659d8" /></defs><Tile fill="url(#as)" /><AppA w={6} /></>],
  ['excel', '#555', <>
    <Tile fill="#fff" /><rect x="-17" y="-24" width="40" height="47" rx="3" fill="#459c66" /><path d="M3-24h17a3 3 0 0 1 3 3v9H3z" fill="#62c088" />
    <path d="M-17 0h20v12h-20z" fill="#27693f" /><path d="M3 0h20v12H3z" fill="#37804c" /><path d="M-17 12h40v8a3 3 0 0 1-3 3h-34a3 3 0 0 1-3-3z" fill="#2b5a39" />
    <rect x="-30" y="-14" width="27" height="27" rx="3" fill="#2a7a45" />
    <text x="-16.500" y="7" textAnchor="middle" fontSize="19" fontWeight="700" fill="#fff">X</text>
  </>],
  ['xcode', null, <>
    <Tile fill="url(#as)" /><rect x="-31" y="-31" width="62" height="62" rx="13" stroke="#a8d5f6" strokeWidth="1.500" /><circle r="23" stroke="#79b8ee" /><AppA w={5} op={0.45} />
    <path d="M18-32L6 0" stroke="#6a6f78" strokeWidth="5" /><path d="M5-4L-8 37" stroke="#2b2e36" strokeWidth="9" strokeLinecap="round" />
    <path d="M5-38c10-4 20-1 26 5l7 1 2 13-5 1-8-7-12 1-4-6z" fill="#3b3e46" />
  </>],
  ['safari', '#555', <>
    <Tile fill="#f1f1f1" /><circle r="31" fill="#3d8ee8" /><circle r="27" stroke="#b9dcfa" strokeWidth="4" strokeDasharray="1 2.500" />
    <path d="M20-18L4 5-4-4z" fill="#e4523f" /><path d="M-19 18L-4-4 4 5z" fill="#f3f3f3" />
  </>],
  ['chrome', '#555', <><Tile fill="#fdfdfd" /><ChromeDisc r={31} /></>],
  ['photoshop', '#555', <><Tile fill="#0a1e33" /><text y="15" textAnchor="middle" fontSize="41" fontWeight="600" fill="#59a8f8" textLength="45" lengthAdjust="spacingAndGlyphs">Ps</text></>],
  ['illustrator', null, <><Tile fill="#2d0403" /><text y="15" textAnchor="middle" fontSize="41" fontWeight="600" fill="#f09a35" textLength="41" lengthAdjust="spacingAndGlyphs">Ai</text></>],
  ['code', null, <>
    <Tile fill="#fff" /><path d="M-25-8l6-6L18 14v11l-6 0z" fill="#2f74c0" /><path d="M-25 8l6 6L18-14v-11l-6 0z" fill="#25609f" /><path d="M11-25l13 6v38l-13 6z" fill="#4a9ae9" />
  </>],
  ['simulator', null, <>
    <Tile fill="url(#as)" /><rect x="-31" y="-31" width="62" height="62" rx="13" stroke="#a8d5f6" strokeWidth="1.500" /><circle r="23" stroke="#79b8ee" /><AppA w={5} op={0.65} />
    <path d="M21-18l15 8c4 2 4 4 2 8L18 36c-2 4-4 4-7 2L-4 29c-3-2-3-4-2-7L16-16c1-3 3-4 5-2z" fill="#101010" />
    <path d="M5-2l11 23M0 8h21" stroke="#dadada" strokeWidth="5" strokeLinecap="round" />
  </>],
  ['matlab', null, <>
    <defs><linearGradient id="ml"><stop stopColor="#7a1d18" /><stop offset=".4" stopColor="#d9572c" /><stop offset=".55" stopColor="#f5b54a" /><stop offset=".8" stopColor="#c8432c" /></linearGradient></defs>
    <path d="M-44 5l24-14C-8-16 4-28 14-40L-8 14l-19 4z" fill="#4d8fc6" /><path d="M-20-9c8-4 14-12 20-20L-8 14z" fill="#2e3f5a" />
    <path d="M15-40c8 12 14 44 29 66C32 14 22 12 14 24 8 34 0 38-6 40c-2-16-6-22-12-25C-2 10 6-36 15-40z" fill="url(#ml)" />
  </>],
  ['skype', '#555', <>
    <circle cx="-15" cy="-15" r="20" fill="#2c86d3" /><circle cx="15" cy="15" r="20" fill="#2878c9" /><circle r="33" fill="#3ea6e6" />
    <text y="17" textAnchor="middle" fontSize="50" fontWeight="700" fill="#fff" textLength="28" lengthAdjust="spacingAndGlyphs">S</text>
  </>],
  ['rule'],
  ['whatsapp', '#555', <>
    <defs><Grad id="wa" a="#85f07e" b="#55bf4b" /></defs><Tile fill="url(#wa)" /><FaWhatsapp x={-31} y={-31} size={62} color="#fff" />
  </>],
  ['quicktime', '#555', <>
    <defs><Grad id="qt" a="#4b4e52" b="#050505" /><Grad id="qr" a="#e9eefb" b="#77797c" /><Grad id="qb" a="#1b51dc" b="#5fe6f8" /></defs>
    <Tile fill="url(#qt)" /><circle r="28" fill="url(#qr)" /><circle r="18.500" fill="url(#qb)" /><path d="M-5 0c3-7 8-6 12 0l22 22v7h-9C10 24-8 12-5 0z" fill="#9a9ea3" />
  </>],
  ['preview', '#555', <>
    <Tile fill="#f1f1f1" /><rect x="-31" y="-31" width="61" height="61" rx="13" fill="#9fc0ee" /><path d="M-31 2h61v16c0 8-5 12-12 12h-37c-8 0-12-5-12-13z" fill="#24406f" />
    <path d="M-31 14l14-4 14 6 10 14h-26c-8 0-12-5-12-13z" fill="#cfd8df" /><path d="M-26 28l12-9 9 11z" fill="#6d5538" />
    <path d="M4 12h22l9 24c0 5-39 5-39 0z" fill="#d2d5d7" stroke="#66696b" strokeWidth="2" /><path d="M5 28l6-9 7 6 6-5 5 10-9 4z" fill="#8b8f91" /><rect x="0" y="-1" width="30" height="15" rx="5" fill="#141414" />
  </>],
  ['downloads', '#555', <>
    <circle cy="8" r="32" fill="#fbfbfb" />
    <path d="M-17-9h16v16h-16z" fill="#da5638" /><path d="M1-9h16v16H1z" fill="#8bb43c" /><path d="M-17 9h16v15h-16z" fill="#4fa3e4" /><path d="M1 9h16v15H1z" fill="#efb64b" />
    <path d="M-7-43H7v14h9L0-13-16-29h9z" fill="#76b766" /><Alert x={29} y={-27}>5</Alert>
  </>],
  ['rule'],
  ['thumbnail', null, <>
    <path d="M-42-22h83v45h-83z" fill="#f7f7f8" /><path d="M-42-22h83v5h-83z" fill="#cfdcf2" /><path d="M-42-17h83v2.500h-83zM-42-15h11v38h-11z" fill="#26282b" /><path d="M-40-4h6v5h-6z" fill="#eee" />
    {[0, 1, 2, 3, 4, 5].map((i) => <path key={i} d={`M${-27 + i * 12}-8v28`} stroke="#cfcfd6" strokeWidth="4" strokeDasharray="2 2" />)}
    <rect x="13" y="14" width="26" height="26" rx="6" fill="#fff" /><g transform="translate(26 27)"><ChromeDisc r={12} /></g>
  </>],
  ['trash', null, <>
    <defs><linearGradient id="tr"><stop stopColor="#cfd1d3" /><stop offset=".15" stopColor="#e6e8ea" /><stop offset=".8" stopColor="#dcdee0" /><stop offset="1" stopColor="#c4c6c8" /></linearGradient></defs>
    <path d="M-32-32l9 62c2 9 44 9 46 0l9-62z" fill="url(#tr)" /><ellipse cy="-31" rx="32" ry="7.500" fill="#d4d5d7" stroke="#eeeff0" strokeWidth="1.500" /><path d="M-21 29c4 7 38 7 42 0" stroke="#f5f5f6" strokeWidth="3" />
  </>],
];

export default function App() {
  return (
    <Screen>
      <Global />
      <TopBar />
      <BrowserWindow>
        <Tabs />
        <Toolbar />
        <Viewport>
          <Site>
            <WpBar />
            <Page />
          </Site>
          <ScrollTrack><ScrollThumb /></ScrollTrack>
        </Viewport>
      </BrowserWindow>
      <Below>
        <DarkWindow>
          <DarkCard />
          <Fit w={174} ml={196}>Help with Asa</Fit>
        </DarkWindow>
        <LightWindow><BackStrip /></LightWindow>
      </Below>

      <Greeting>
        <Fit w={361}>Howdy, Admin hdghdfgdfgdfg</Fit>
        <Icon w={26} ml={26}><circle cx="13" cy="7" r="6" fill="#f0f0f6" /><path d="M0 26c0-14 26-14 26 0z" fill="#f0f0f6" /></Icon>
        <Icon w={26} ml={38}><circle cx="11" cy="11" r="8" stroke="#f1f1f6" strokeWidth="3" /><path d="M17 17l8 8" stroke="#f1f1f6" strokeWidth="4" /></Icon>
      </Greeting>
      <ChatButton>
        <Icon w={74}>
          <path d="M37 3.500A33.500 33.500 0 1 1 20 66L3 71l5.500-16.500A33.500 33.500 0 0 1 37 3.500z" stroke="#000" strokeWidth="6" strokeLinejoin="round" />
          <circle cx="22.500" cy="37" r="3.800" fill="#000" /><circle cx="37" cy="37" r="3.800" fill="#000" /><circle cx="51.500" cy="37" r="3.800" fill="#000" />
        </Icon>
        <ChatCount><Fit w={14}>3</Fit></ChatCount>
      </ChatButton>
      <ToTop><Icon w={28} h={16}><path d="M2 14L14 2.500 26 14" stroke="#fff" strokeWidth="4" /></Icon></ToTop>
      <DockShade />
      <Ink width="3024" height="1964" fill="none">
        <path d={smooth(loop)} stroke={RED} strokeWidth="4.600" strokeLinecap="round" strokeLinejoin="round" />
        <circle cx="942" cy="1432" r="2.500" fill={RED} /><circle cx="2137" cy="1372" r="2.500" fill={RED} />
      </Ink>
      <Remark w={2194}>Once user click redesign, this form also need to be auto filled from previous data</Remark>
      <DockBar>
        {dock.map(([name, dot, art], i) => (name === 'rule'
          ? <DockRule key={i} />
          : <DockCell key={name}><Art>{art}</Art>{dot && <RunDot $c={dot} />}</DockCell>))}
      </DockBar>
    </Screen>
  );
}
